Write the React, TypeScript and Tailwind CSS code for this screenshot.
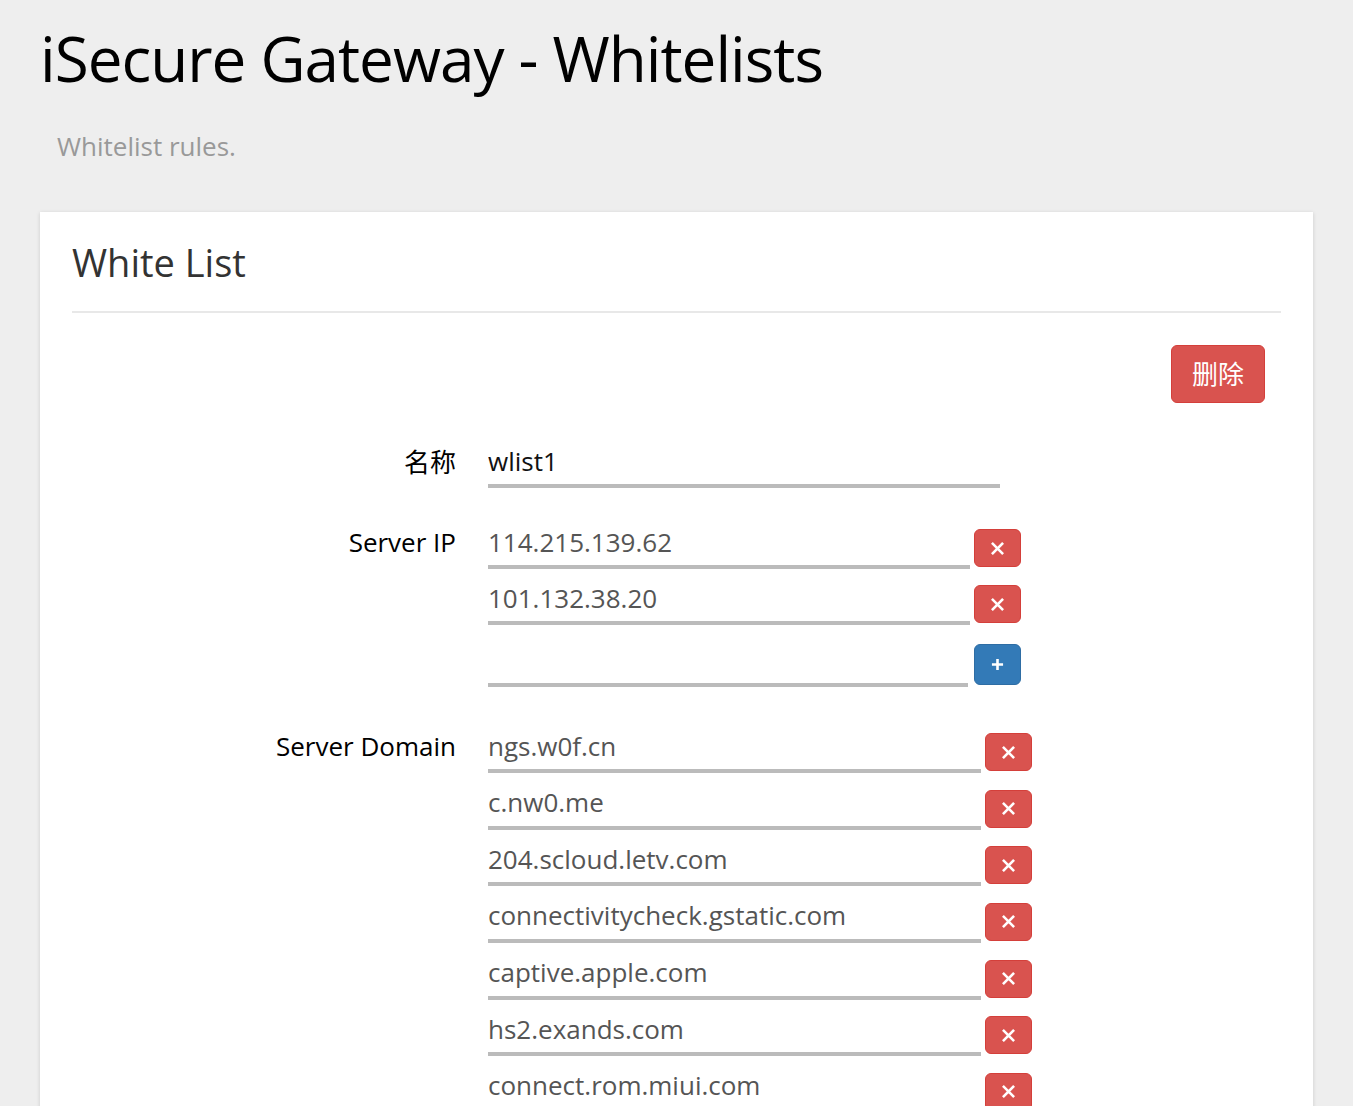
const IPS = ["114.215.139.62", "101.132.38.20"];

const DOMAINS = [
  "ngs.w0f.cn",
  "c.nw0.me",
  "204.scloud.letv.com",
  "connectivitycheck.gstatic.com",
  "captive.apple.com",
  "hs2.exands.com",
  "connect.rom.miui.com",
];

function RemoveButton() {
  return (
    <button className="mb-[2px] flex h-[38px] w-[47px] shrink-0 items-center justify-center rounded-[6px] border border-[#d43f3a] bg-[#d9534f] text-white">
      <svg width="13" height="13" viewBox="0 0 14 14" aria-hidden="true">
        <path d="M2 2L12 12M12 2L2 12" stroke="currentColor" strokeWidth="2.8" strokeLinecap="square" />
      </svg>
    </button>
  );
}

function LineInput({ value, width, dark }: { value: string; width: string; dark?: boolean }) {
  return (
    <input
      readOnly
      value={value}
      className={`h-[45px] ${width} border-b-[4px] border-[#bbb] bg-transparent px-0 pb-[6px] text-[26px] ${
        dark ? "text-[#111]" : "text-[#555]"
      } outline-none`}
    />
  );
}

export default function App() {
  return (
    <div className="min-h-screen bg-[#eee] px-10 pt-[16px] font-['Open_Sans','Noto_Sans_CJK_SC',sans-serif]">
      <h1 className="text-[62px] leading-[84px] tracking-[-1px] text-black">iSecure Gateway - Whitelists</h1>
      <p className="mt-[28px] pl-[17px] text-[26px] leading-[36px] text-[#999]">Whitelist rules.</p>

      <div className="mt-[48px] bg-white px-8 pt-[24px] shadow-[0_1px_4px_rgba(0,0,0,0.15)]">
        <h2 className="text-[38px] leading-[52px] text-[#333]">White List</h2>
        <div className="mt-[23px] h-[2px] bg-[#e8e8e8]" />

        <div className="flex justify-end pr-4 pt-8">
          <button className="h-[58px] w-[94px] rounded-[6px] border border-[#d43f3a] bg-[#d9534f] text-[26px] text-white">
            删除
          </button>
        </div>

        <div className="mt-[40px] grid grid-cols-[384px_1fr] gap-x-8">
          <div className="pt-[1px] text-right text-[26px] leading-[36px] text-black">名称</div>
          <div>
            <LineInput value="wlist1" width="w-[512px]" dark />
          </div>

          <div className="mt-[36px] text-right text-[26px] leading-[36px] text-black">Server IP</div>
          <div className="mt-[36px] flex flex-col">
            {IPS.map((ip) => (
              <div key={ip} className="mb-[11px] flex items-end gap-[4px]">
                <LineInput value={ip} width="w-[482px]" />
                <RemoveButton />
              </div>
            ))}
            <div className="mt-[6px] flex items-end gap-[6px]">
              <LineInput value="" width="w-[480px]" />
              <button className="mb-[2px] flex h-[41px] w-[47px] shrink-0 items-center justify-center rounded-[6px] border border-[#2e6da4] bg-[#337ab7] text-white">
                <svg width="13" height="13" viewBox="0 0 14 14" aria-hidden="true">
                  <path d="M7 1V13M1 7H13" stroke="currentColor" strokeWidth="2.8" />
                </svg>
              </button>
            </div>
          </div>

          <div className="mt-[41px] text-right text-[26px] leading-[36px] text-black">Server Domain</div>
          <div className="mt-[41px] flex flex-col">
            {DOMAINS.map((d) => (
              <div key={d} className="mb-[11.67px] flex items-end gap-[4px]">
                <LineInput value={d} width="w-[493px]" />
                <RemoveButton />
              </div>
            ))}
          </div>
        </div>
      </div>
    </div>
  );
}
